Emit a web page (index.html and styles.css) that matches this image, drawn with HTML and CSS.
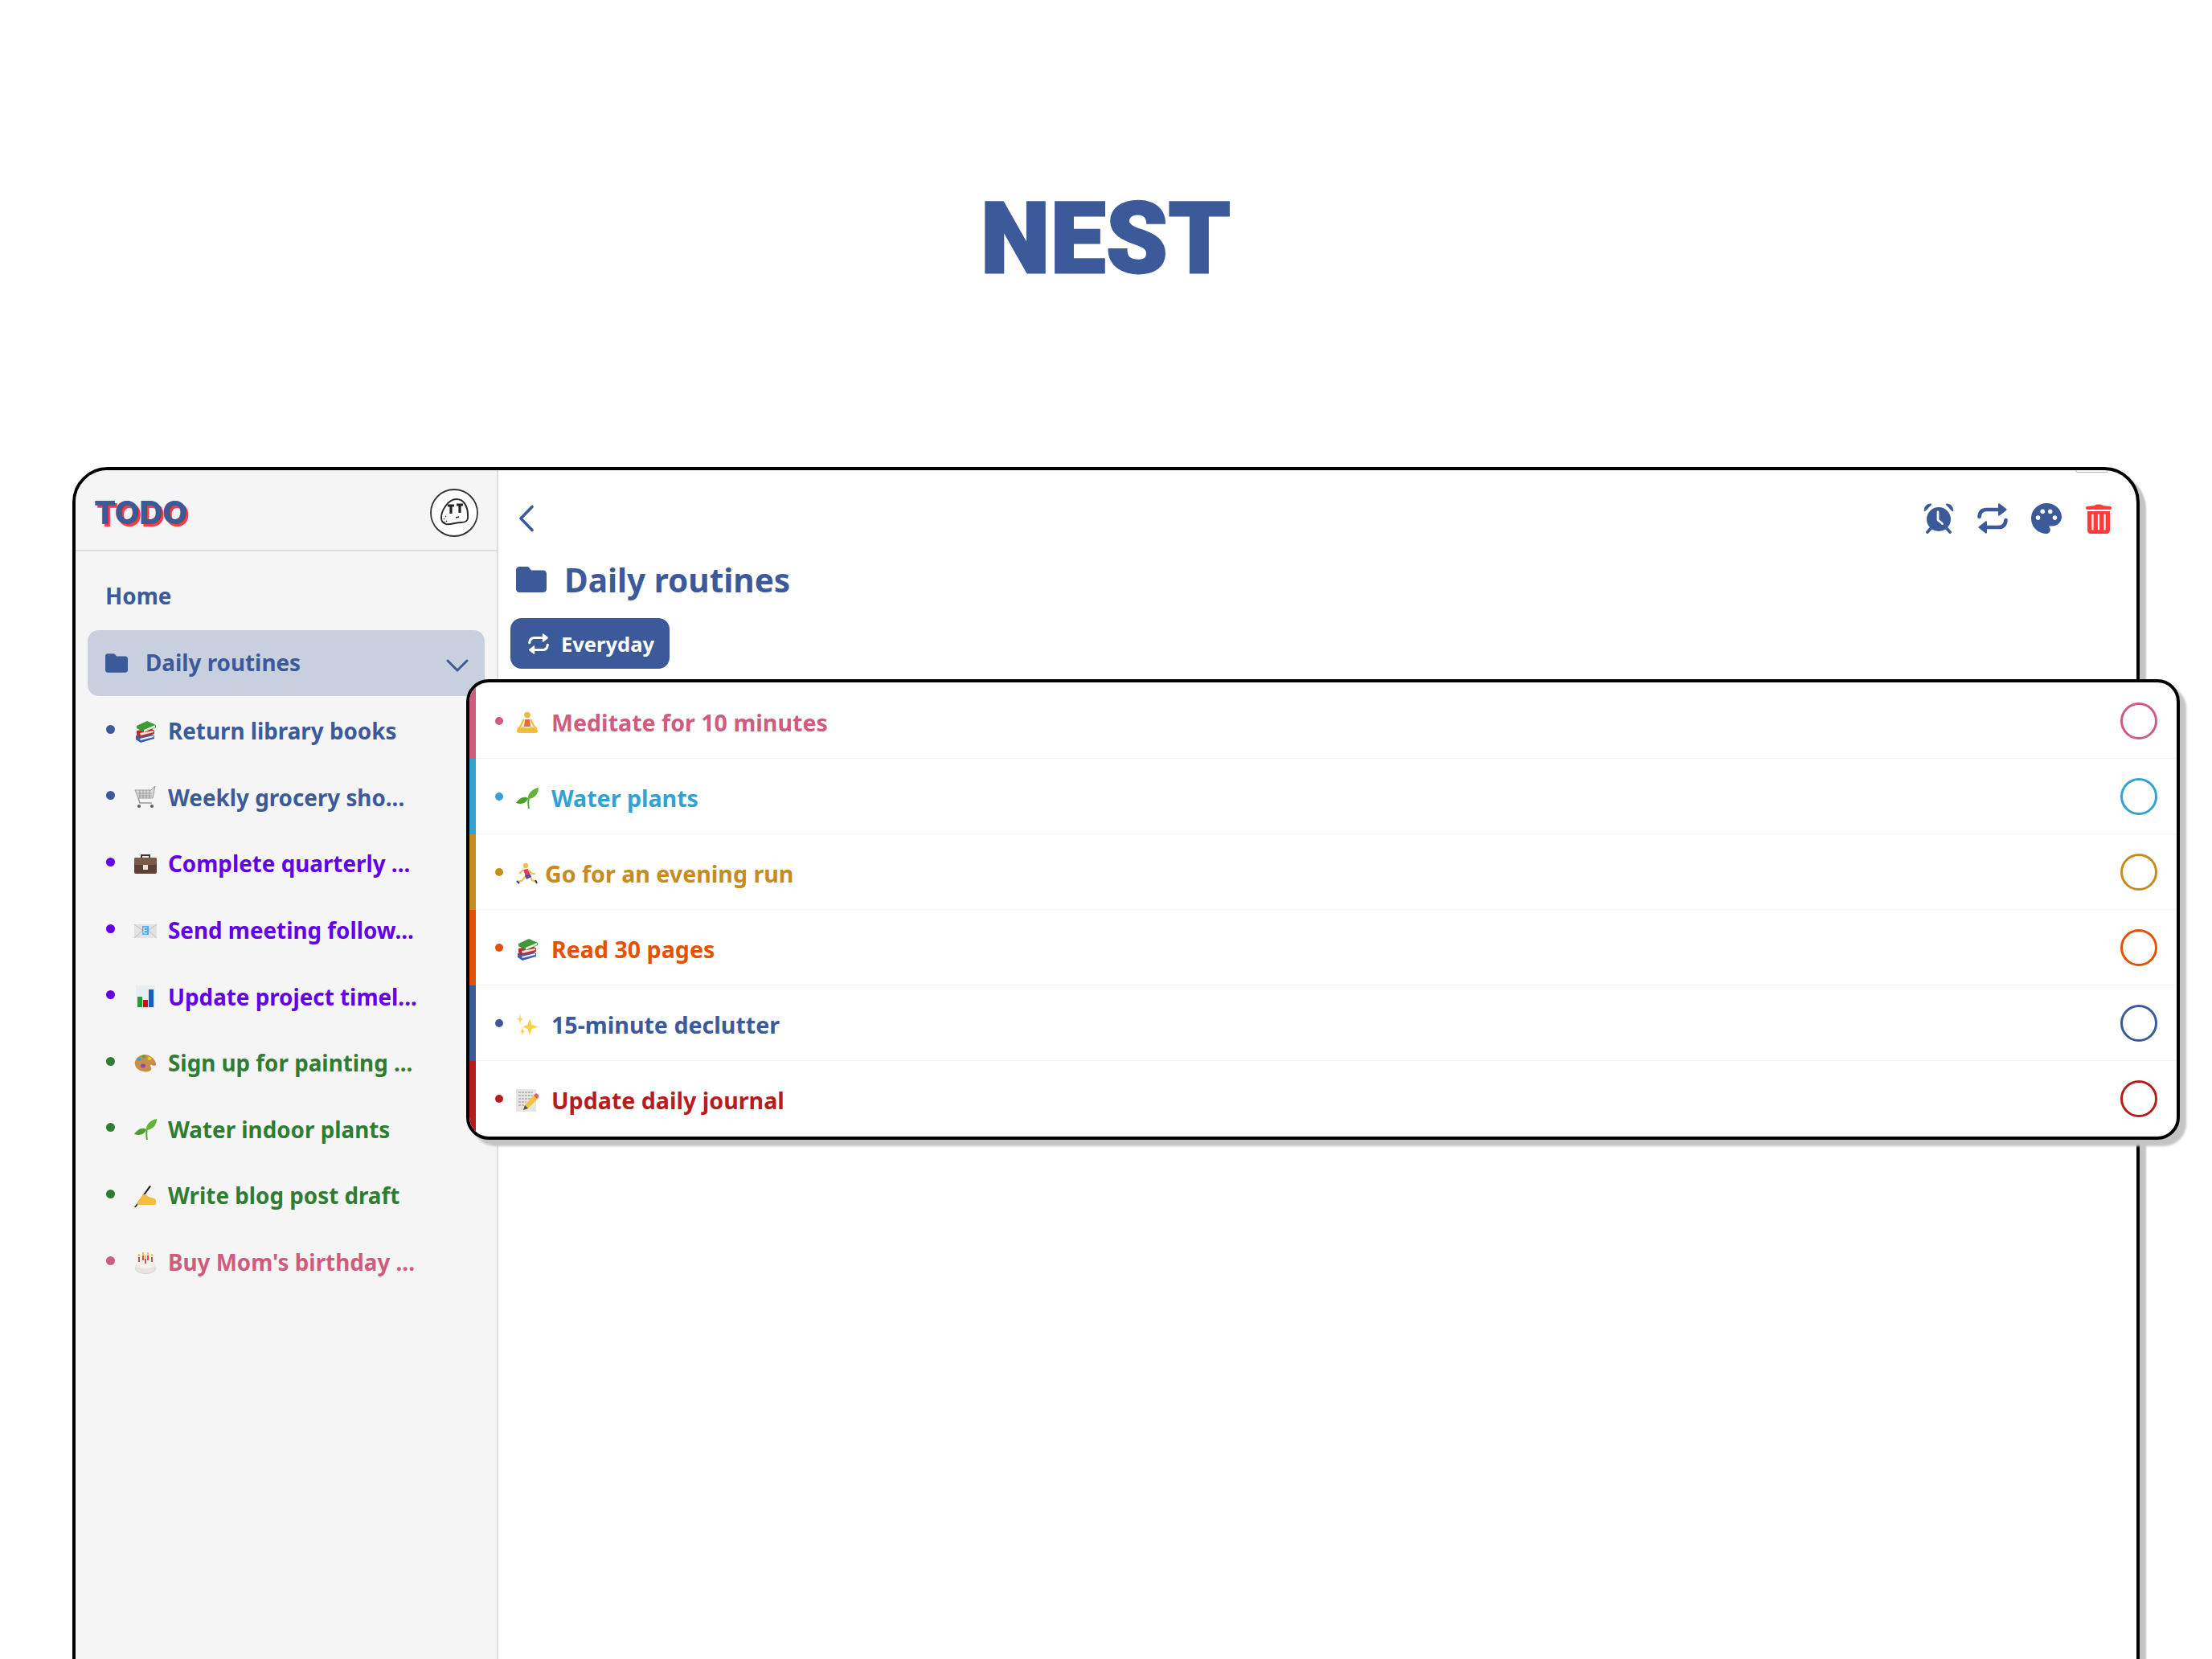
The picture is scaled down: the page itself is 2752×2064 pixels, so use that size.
FILE: index.html
```html
<!DOCTYPE html>
<html lang="en">
<head>
<meta charset="utf-8">
<title>Nest</title>
<link rel="stylesheet" href="styles.css">
</head>
<body>
<svg class="defs" width="0" height="0" aria-hidden="true">
  <symbol id="folder" viewBox="0 0 38 32"><path d="M4 0h9.5c1.2 0 2.300.5 3 1.400L19 4.500h15c2.200 0 4 1.800 4 4V28c0 2.200-1.800 4-4 4H4c-2.200 0-4-1.800-4-4V4c0-2.200 1.800-4 4-4z" fill="currentColor"/></symbol>
  <symbol id="repeat" viewBox="0 0 38 38"><g fill="none" stroke="currentColor" stroke-width="4.600" stroke-linecap="round"><path d="M2.500 17C3 11 6.500 8 11.500 8H26"/><path d="M35.500 21C35 27 31.500 30 26.500 30H12"/></g><path d="M26 1.500c0-1 1.200-1.500 2-.8l8 6.200c.8.600.8 1.600 0 2.200l-8 6.200c-.8.700-2 .2-2-.8zM12 36.500c0 1-1.200 1.500-2 .8l-8-6.200c-.8-.6-.8-1.600 0-2.200l8-6.200c.8-.7 2-.2 2 .8z" fill="currentColor"/></symbol>
  <symbol id="books" viewBox="0 0 28 28"><path d="M2 19l17-3 6 3v4L8 28l-6-4z" fill="#3f5fa8"/><path d="M7 23l17-4v2L8 25z" fill="#f0f0f0"/><path d="M3 13l18-3 4 3v4L7 21l-4-3z" fill="#c6262a"/><path d="M7 16l17-3v2L8 19z" fill="#f2e6e0"/><path d="M3 7l13-6 11 5v3L12 15 3 10z" fill="#3f9a36"/><path d="M12 12l14-6v2.500L12 15z" fill="#eef3e4"/></symbol>
  <symbol id="cart" viewBox="0 0 28 28"><path d="M1 5h20l5-5-3 15H5z" fill="#dadada" stroke="#9a9a9a"/><path d="M4 9h18M5 12h17M7 5v10M11 5v10M15 5v10M19 5v10" stroke="#8f8f8f" stroke-width=".8"/><path d="M5 15l2 6h15" fill="none" stroke="#999" stroke-width="1.500"/><circle cx="6" cy="25" r="2" fill="#555"/><circle cx="22" cy="25" r="2" fill="#555"/></symbol>
  <symbol id="briefcase" viewBox="0 0 28 28"><path d="M9 7V3h10v4" fill="none" stroke="#4a3226" stroke-width="2"/><rect y="6" width="28" height="20" rx="2" fill="#5d4035"/><rect y="6" width="28" height="9" rx="2" fill="#7a5a48"/><rect x="11" y="15" width="6" height="6" fill="#e8e4dc"/></symbol>
  <symbol id="mail" viewBox="0 0 28 28"><rect y="6" width="28" height="17" fill="#e2e2e2"/><path d="M0 6l14 10L28 6M0 23l10-9M28 23l-10-9" fill="none" stroke="#bdbdbd"/><rect x="10" y="8" width="8" height="11" fill="#5aa8ec"/><path d="M12 10h4M12 13.500h4M12 17h4M12 10v7" stroke="#dcefff" stroke-width="1.200"/></symbol>
  <symbol id="chart" viewBox="0 0 28 28"><rect x="2" width="24" height="28" fill="#e6eef2"/><rect x="4" y="14" width="6" height="13" fill="#1f9e3a"/><rect x="11" y="18" width="6" height="9" fill="#c6141c"/><rect x="18" y="5" width="6" height="22" fill="#1461b8"/></symbol>
  <symbol id="palette" viewBox="0 0 28 28"><path d="M1 12C3 5 11 1 18 4c5 2 9 7 9 11 0 2-3 2-5 1s-3 1-1 3c1 2 0 4-3 5-7 2-19-3-17-12z" fill="#c98f4a"/><ellipse cx="6" cy="9" rx="2.500" ry="2" fill="#33a6d8"/><ellipse cx="12" cy="5.500" rx="2.500" ry="2" fill="#4cae3c"/><ellipse cx="19" cy="8" rx="2.500" ry="2" fill="#f2cb2e"/><ellipse cx="11" cy="17" rx="3" ry="2.500" fill="#8e44bd"/><ellipse cx="25" cy="15" rx="1.800" ry="1.500" fill="#ef6a3a"/></symbol>
  <symbol id="sprout" viewBox="0 0 28 28"><path d="M15 27c-1-6-1-9 0-14l2 0c-1 5-1 9 0 14z" fill="#5aa832"/><path d="M15 15C14 8 21 2 28 1c0 7-4 13-13 14z" fill="#63b535"/><path d="M15 14C10 11 4 14 0 20c6 2 13 1 15-6z" fill="#4f9e2a"/></symbol>
  <symbol id="hand" viewBox="0 0 28 28"><path d="M0 28L19 1l2 1L2 28z" fill="#222"/><path d="M4 22c3-3 5-9 8-10s4 2 6 3 9 1 9 5 0 5-2 5H7c-3 0-5-1-3-3z" fill="#f5bd3c"/></symbol>
  <symbol id="cake" viewBox="0 0 28 28"><ellipse cx="14" cy="21" rx="13" ry="7" fill="#d5d5d8"/><ellipse cx="14" cy="15" rx="12" ry="7" fill="#f6f1ec"/><path d="M2 15v6c0 3 5 6 12 6s12-3 12-6v-6c0 3-5 6-12 6S2 18 2 15z" fill="#e9e4e0"/><path d="M6 7v6M11 5v6M17 5v6M22 7v6M14 9v6" stroke="#c3282f" stroke-width="1.600"/><path d="M6 3v3M11 1v3M17 1v3M22 3v3M14 5v3" stroke="#f0c040" stroke-width="2"/></symbol>
  <symbol id="meditate" viewBox="0 0 28 28"><circle cx="14" cy="4.500" r="3.800" fill="#f2b93b"/><path d="M9.500 10L6 18l-4 4" fill="none" stroke="#f5bd3c" stroke-width="2.200"/><path d="M18.500 10l3.500 8 4 4" fill="none" stroke="#f5bd3c" stroke-width="2.200"/><path d="M11 10h6l1 9h-8z" fill="#ee6a2a"/><path d="M9 19c-3 1-8 3-8 5.500S4 27 7 27h14c3 0 6 0 6-2.500S22 20 19 19c-2 2-8 2-10 0z" fill="#f5bd3c"/></symbol>
  <symbol id="runner" viewBox="0 0 28 28"><circle cx="12" cy="4" r="3.200" fill="#f3c048"/><path d="M9 9l6-1 3 8-6 1z" fill="#e8336b"/><path d="M9 9L4 14M15 9l5 5 4 0" stroke="#f3c048" stroke-width="2" fill="none"/><path d="M12 17l-5 6-5 1M17 16l3 6 5 2" stroke="#f3c048" stroke-width="2.300" fill="none"/><path d="M11 16l7-1 1 3-6 3z" fill="#3b55a8"/><path d="M1 23l3 3M24 22l2 4" stroke="#2b3f8a" stroke-width="2"/></symbol>
  <symbol id="sparkles" viewBox="0 0 28 28"><path d="M17 6l2.500 8 8 2.500-8 2.500L17 27l-2.500-8-6.500-2.500 6.500-2.500z" fill="#fcd13f"/><path d="M5 0l1.200 5.500 3 1.200-3 1.200L5 13 3.800 8 1 6.700l2.800-1.200z" fill="#fcd86a"/><path d="M8 17l1 4.300 2.500 1-2.500 1L8 27l-1-3.700-2.500-1 2.500-1z" fill="#fcd13f"/></symbol>
  <symbol id="memo" viewBox="0 0 28 28"><rect width="25" height="28" fill="#e8e6e3"/><path d="M3 4h18M3 8h18M3 12h16M3 16h10M3 20h7" stroke="#8e8e8e" stroke-width="1" stroke-dasharray="3 1"/><path d="M9 26l2-6L23 7l5 4-13 13z" fill="#f4c23c"/><path d="M22 8l3-3 3 2 0 3-2 2z" fill="#e85d6c"/><path d="M9 26l2-6 4 4z" fill="#555"/></symbol>
</svg>

<header class="hero"><h1 class="hero-title">NEST</h1></header>

<div class="device">
  <span class="status-cap"></span>
  <aside class="sidebar">
    <div class="side-head">
      <span class="logo">TODO</span>
      <span class="avatar">
        <svg viewBox="0 0 60 60" width="60" height="60">
          <circle cx="30" cy="30" r="29" fill="#fff" stroke="#333" stroke-width="1.800"/>
          <path d="M14 36C14 28 22 13 33 13c9 0 14 9 14 20 1 7-3 9-8 9-7 0-14 3-19 2-4-1-6-4-6-8z" fill="#fff" stroke="#2b2b2b" stroke-width="2"/>
          <path d="M22 21h8M26 21v10M33 20h8M37 20v10" stroke="#222" stroke-width="3.200"/>
          <path d="M32 36l4-1" stroke="#222" stroke-width="1.600"/>
          <path d="M17 37l1 1M20 40l1 1M19 34l1 1M17 41l1 1" stroke="#333" stroke-width="1.600"/>
        </svg>
      </span>
    </div>
    <nav class="nav">
      <div class="nav-home">Home</div>
      <div class="nav-group">
        <svg class="nav-folder"><use href="#folder"/></svg>
        <span class="nav-group-label">Daily routines</span>
        <svg class="nav-chevron" viewBox="0 0 28 16"><path d="M2 2l12 12L26 2" fill="none" stroke="currentColor" stroke-width="3" stroke-linecap="round" stroke-linejoin="round"/></svg>
      </div>
      <ul class="side-list">
        <li class="side-item c-blue"><i class="dot"></i><svg class="emoji"><use href="#books"/></svg><span>Return library books</span></li>
        <li class="side-item c-blue"><i class="dot"></i><svg class="emoji"><use href="#cart"/></svg><span>Weekly grocery sho...</span></li>
        <li class="side-item c-purple"><i class="dot"></i><svg class="emoji"><use href="#briefcase"/></svg><span>Complete quarterly ...</span></li>
        <li class="side-item c-purple"><i class="dot"></i><svg class="emoji"><use href="#mail"/></svg><span>Send meeting follow...</span></li>
        <li class="side-item c-purple"><i class="dot"></i><svg class="emoji"><use href="#chart"/></svg><span>Update project timel...</span></li>
        <li class="side-item c-green"><i class="dot"></i><svg class="emoji"><use href="#palette"/></svg><span>Sign up for painting ...</span></li>
        <li class="side-item c-green"><i class="dot"></i><svg class="emoji"><use href="#sprout"/></svg><span>Water indoor plants</span></li>
        <li class="side-item c-green"><i class="dot"></i><svg class="emoji"><use href="#hand"/></svg><span>Write blog post draft</span></li>
        <li class="side-item c-pink"><i class="dot"></i><svg class="emoji"><use href="#cake"/></svg><span>Buy Mom's birthday ...</span></li>
      </ul>
    </nav>
  </aside>

  <main class="main">
    <div class="toolbar">
      <svg class="back" viewBox="0 0 20 34"><path d="M17 2.500L3 17l14 14.500" fill="none" stroke="currentColor" stroke-width="3.600" stroke-linecap="round" stroke-linejoin="round"/></svg>
      <div class="tools">
        <svg class="tool" viewBox="0 0 38 38">
          <circle cx="19" cy="20" r="15" fill="currentColor"/>
          <path d="M1 9.500C.5 4.500 4 .5 9 .5c1.500 0 1.500 1.500.5 2L2.800 9.500c-.6.700-1.700.7-1.800 0zM37 9.500c.5-5-3-9-8-9-1.500 0-1.500 1.500-.5 2l6.700 7c.6.700 1.700.7 1.800 0z" fill="currentColor"/>
          <path d="M5 36l4-4.500M33 36l-4-4.500" stroke="currentColor" stroke-width="3.800" stroke-linecap="round"/>
          <path d="M18 11v10l5.500 4.500" fill="none" stroke="#fff" stroke-width="2.800" stroke-linecap="round" stroke-linejoin="round"/>
        </svg>
        <svg class="tool"><use href="#repeat"/></svg>
        <svg class="tool" viewBox="2 2 20 20"><path d="M12 2C6.490 2 2 6.490 2 12s4.490 10 10 10c1.380 0 2.500-1.120 2.500-2.500 0-.61-.23-1.200-.64-1.670-.08-.1-.13-.21-.13-.33 0-.28.22-.5.5-.5H16c3.310 0 6-2.690 6-6 0-4.960-4.490-9-10-9zm5.500 11c-.83 0-1.500-.67-1.500-1.500s.67-1.500 1.500-1.500 1.500.67 1.500 1.500-.67 1.500-1.500 1.500zm-3-4c-.83 0-1.500-.67-1.500-1.500S13.670 6 14.500 6s1.500.67 1.500 1.500S15.330 9 14.500 9zM5 11.500c0-.83.67-1.500 1.500-1.500s1.500.67 1.500 1.500S7.330 13 6.500 13 5 12.330 5 11.500zm6-4c0 .83-.67 1.500-1.500 1.500S8 8.330 8 7.500 8.670 6 9.500 6s1.500.67 1.500 1.500z" fill="currentColor"/></svg>
        <svg class="tool tool-trash" viewBox="0 0 34 38">
          <path d="M12 3c0-2 10-2 10 0l9.500 1c2 .2 2 4 0 4h-29c-2 0-2-3.800 0-4z" fill="currentColor"/>
          <path d="M3 10h28v24c0 2.200-1.800 4-4 4H7c-2.200 0-4-1.800-4-4z" fill="currentColor"/>
          <path d="M9.500 14.500v18M17 14.500v18M24.500 14.500v18" stroke="#fff" stroke-width="2.200" stroke-linecap="round"/>
        </svg>
      </div>
    </div>
    <h2 class="title"><svg class="title-icon"><use href="#folder"/></svg>Daily routines</h2>
    <div class="chip"><svg class="chip-icon"><use href="#repeat"/></svg>Everyday</div>

    <section class="card">
      <div class="row c-pink"><i class="dot"></i><svg class="emoji"><use href="#meditate"/></svg><span class="row-text">Meditate for 10 minutes</span><i class="ring"></i></div>
      <div class="row c-cyan"><i class="dot"></i><svg class="emoji"><use href="#sprout"/></svg><span class="row-text">Water plants</span><i class="ring"></i></div>
      <div class="row c-ochre"><i class="dot"></i><svg class="emoji"><use href="#runner"/></svg><span class="row-text row-tight">Go for an evening run</span><i class="ring"></i></div>
      <div class="row c-orange"><i class="dot"></i><svg class="emoji"><use href="#books"/></svg><span class="row-text">Read 30 pages</span><i class="ring"></i></div>
      <div class="row c-blue"><i class="dot"></i><svg class="emoji"><use href="#sparkles"/></svg><span class="row-text">15-minute declutter</span><i class="ring"></i></div>
      <div class="row c-red"><i class="dot"></i><svg class="emoji"><use href="#memo"/></svg><span class="row-text">Update daily journal</span><i class="ring"></i></div>
    </section>
  </main>
</div>
</body>
</html>
```
FILE: styles.css
```css
html, body {
  margin: 0;
  height: 2064px;
  overflow: hidden;
  background: #fff;
  font-family: "Noto Sans", "Open Sans", sans-serif;
}
.defs { position: absolute; }

.c-blue { color: #3c5a9a; }
.c-purple { color: #6200ea; }
.c-green { color: #2e7d32; }
.c-pink { color: #cf5c7e; }
.c-cyan { color: #32a2d0; }
.c-ochre { color: #c68c1e; }
.c-orange { color: #e65100; }
.c-red { color: #b71c1c; }

.hero {
  height: 581px;
  display: flex;
  justify-content: center;
  padding-top: 226px;
  box-sizing: border-box;
}
.hero-title {
  margin: 0;
  font-family: "Roboto", sans-serif;
  font-weight: 900;
  font-size: 122px;
  line-height: 144px;
  letter-spacing: 1px;
  -webkit-text-stroke: 3px #3c5a9a;
  color: #3c5a9a;
}

.device {
  position: relative;
  display: flex;
  width: 2572px;
  height: 1560px;
  margin-left: 90px;
  box-sizing: border-box;
  border: 4px solid #000;
  border-radius: 44px;
  box-shadow: 8px 8px 2px #c4c4c4;
  background: #fff;
}
.status-cap {
  position: absolute;
  top: 0;
  right: 35px;
  width: 41px;
  height: 3px;
  box-sizing: border-box;
  border: 1px solid #bbb;
  border-top: 0;
  border-radius: 0 0 6px 6px;
}

.sidebar {
  width: 524px;
  flex: none;
  background: #f5f5f5;
  border-right: 2px solid #dcdcdc;
  border-top-left-radius: 40px;
}
.side-head {
  height: 101px;
  box-sizing: border-box;
  display: flex;
  align-items: center;
  justify-content: space-between;
  padding: 6px 23px 0 23px;
  border-bottom: 2px solid #dcdcdc;
}
.logo {
  font-family: "Inter", sans-serif;
  font-weight: 800;
  font-size: 40px;
  letter-spacing: -.2px;
  color: #3c5a9a;
  text-shadow: 3px 3px 0 #ff3b3b;
}
.avatar { display: block; width: 60px; height: 60px; }

.nav { padding: 0 15px; }
.nav-home {
  height: 98px;
  box-sizing: border-box;
  padding: 11px 0 0 22px;
  display: flex;
  align-items: center;
  font-size: 27.800px;
  font-weight: 700;
  color: #3c5a9a;
}
.nav-group {
  height: 82px;
  box-sizing: border-box;
  display: flex;
  align-items: center;
  padding: 0 20px 0 22px;
  background: #c8d0e0;
  border-radius: 14px;
  color: #3c5a9a;
  font-size: 27.800px;
  font-weight: 700;
}
.nav-folder { width: 28px; height: 24px; flex: none; }
.nav-group-label { margin: 0 0 3px 22px; flex: 1; }
.nav-chevron { width: 28px; height: 16px; margin-top: 6px; }

.side-list { list-style: none; margin: 0; padding: 0; }
.side-item {
  height: 82.600px;
  display: flex;
  align-items: center;
  padding-left: 23px;
  font-size: 27.800px;
  font-weight: 700;
  white-space: nowrap;
}
.side-item span { padding-top: 4px; }
.dot {
  width: 11px;
  height: 11px;
  border-radius: 50%;
  background: currentColor;
  flex: none;
}
.emoji { width: 28px; height: 28px; flex: none; }
.side-item .emoji { margin: 5px 14px 0 24px; }

.main {
  flex: 1;
  min-width: 0;
  display: flex;
  flex-direction: column;
  color: #3c5a9a;
}
.toolbar {
  height: 120px;
  flex: none;
  display: flex;
  align-items: center;
  justify-content: space-between;
  padding: 0 30px 0 25px;
  margin-bottom: -14px;
}
.back { width: 20px; height: 34px; }
.tools { display: flex; gap: 29px; align-items: center; }
.tool { width: 38px; height: 38px; display: block; }
.tool-trash { width: 34px; color: #ff3b3b; }

.title {
  margin: 0;
  height: 60px;
  display: flex;
  align-items: center;
  padding-left: 22px;
  font-size: 40.500px;
  font-weight: 700;
}
.title-icon { width: 38px; height: 32px; margin-right: 22px; }
.chip {
  align-self: flex-start;
  margin: 18px 0 0 15px;
  height: 63px;
  display: flex;
  align-items: center;
  padding: 0 19px 0 22px;
  background: #3c5a9a;
  border-radius: 14px;
  color: #fff;
  font-size: 25.500px;
  font-weight: 700;
}
.chip-icon { width: 26px; height: 26px; margin-right: 15px; }

.card {
  margin: 13px -54px 0 -40px;
  height: 573px;
  box-sizing: border-box;
  flex: none;
  border: 4px solid #000;
  border-radius: 28px;
  background: #fff;
  box-shadow: 8px 8px 3px #c4c4c4;
  overflow: hidden;
  position: relative;
  z-index: 1;
}
.row {
  height: 94px;
  box-sizing: border-box;
  display: flex;
  align-items: center;
  padding: 0 24px;
  border-left: 8px solid currentColor;
  box-shadow: inset 0 -1px 0 #f4f4f4;
  font-size: 28.600px;
  font-weight: 700;
}
.row:first-child { margin-top: 1px; }
.row:last-child { box-shadow: none; }
.row .dot { width: 10px; height: 10px; }
.row .emoji { margin: 3px 16px 0 16px; }
.row-text { flex: 1; padding-top: 3px; white-space: nowrap; }
.row-tight { margin-left: -8px; }
.ring {
  width: 46px;
  height: 46px;
  box-sizing: border-box;
  border: 3px solid currentColor;
  border-radius: 50%;
  flex: none;
}
```
